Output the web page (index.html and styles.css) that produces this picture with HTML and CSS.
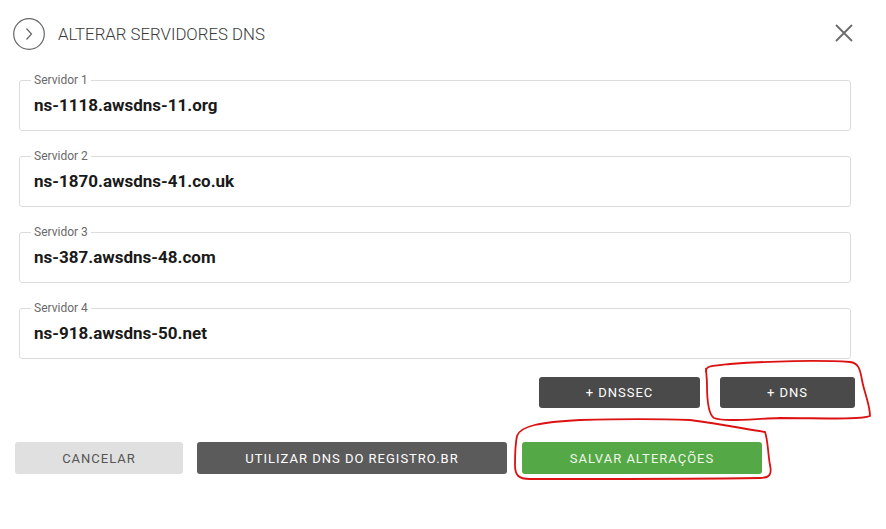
FILE: index.html
```html
<!DOCTYPE html>
<html lang="pt-BR">
<head>
<meta charset="utf-8">
<title>Alterar servidores DNS</title>
<link rel="stylesheet" href="styles.css">
</head>
<body>
<div class="dialog">
  <header class="head">
    <span class="circle">
      <svg width="32" height="32" viewBox="0 0 32 32"><circle cx="16" cy="16" r="15.3" fill="none" stroke="#666" stroke-width="1.2"/><path d="M13.5 10.5 L18.5 16 L13.5 21.5" fill="none" stroke="#666" stroke-width="1.2"/></svg>
    </span>
    <h1 class="title">ALTERAR SERVIDORES DNS</h1>
    <span class="close">
      <svg width="18" height="18" viewBox="0 0 18 18"><path d="M1 1 L17 17 M17 1 L1 17" stroke="#6b6b6b" stroke-width="1.8" fill="none"/></svg>
    </span>
  </header>

  <div class="fields">
    <fieldset class="field"><legend>Servidor 1</legend><div class="value">ns-1118.awsdns-11.org</div></fieldset>
    <fieldset class="field"><legend>Servidor 2</legend><div class="value">ns-1870.awsdns-41.co.uk</div></fieldset>
    <fieldset class="field"><legend>Servidor 3</legend><div class="value">ns-387.awsdns-48.com</div></fieldset>
    <fieldset class="field"><legend>Servidor 4</legend><div class="value">ns-918.awsdns-50.net</div></fieldset>
  </div>

  <div class="row-add">
    <button class="btn dark btn-dnssec">+ DNSSEC</button>
    <button class="btn dark btn-dns">+ DNS</button>
  </div>

  <div class="row-actions">
    <button class="btn light btn-cancel">CANCELAR</button>
    <button class="btn gray btn-registro">UTILIZAR DNS DO REGISTRO.BR</button>
    <button class="btn green btn-save">SALVAR ALTERAÇÕES</button>
  </div>
</div>

<svg class="marks" width="886" height="529" viewBox="0 0 886 529">
  <path d="M706 372 C705 366 710 366 730 364 C770 361 820 360 850 362 C858 363 860 368 862 380 C864 392 870 404 870 416 C860 420 820 418 780 418 C750 419 725 422 714 418 C708 414 707 400 707 385 C707 378 706 372 706 368" fill="none" stroke="#d11" stroke-width="1.8"/>
  <path d="M690 420 C720 424 740 428 765 432 C768 440 768 455 770 465 C772 474 770 478 760 478 C700 479 600 479 530 479 C518 479 515 475 515 465 C515 455 515 445 517 436 C520 426 540 422 580 420 C620 419 660 419 690 420" fill="none" stroke="#d11" stroke-width="1.8"/>
</svg>
</body>
</html>
```

FILE: styles.css
```css
html, body {
  margin: 0;
  padding: 0;
  background: #fff;
}
body {
  width: 886px;
  height: 529px;
  overflow: hidden;
  position: relative;
  font-family: Roboto, "Liberation Sans", Arial, sans-serif;
}
.dialog {
  padding: 18px 0 0 0;
}
.head {
  display: flex;
  align-items: center;
  height: 32px;
  padding-left: 13px;
  padding-right: 33px;
}
.circle {
  width: 32px;
  height: 32px;
  display: block;
}
.circle svg, .close svg { display: block; }
.title {
  margin: 0 0 0 13px;
  font-size: 16.8px;
  font-weight: 300;
  color: #3a3a3a;
  letter-spacing: 0;
  flex: 1;
}
.close {
  width: 18px;
  height: 18px;
  margin-bottom: 2px;
}
.fields {
  display: flex;
  flex-direction: column;
  gap: 18px;
  margin: 23px 35px 0 19px;
}
.field {
  margin: 0;
  height: 58px;
  box-sizing: border-box;
  border: 1px solid #dcdcdc;
  border-radius: 3px;
  padding: 0 14px;
}
.field legend {
  font-size: 12px;
  color: #6a6a6a;
  padding: 0 3px;
  margin-left: -3px;
  line-height: 14px;
}
.value {
  font-size: 17px;
  font-weight: 700;
  color: #1a1a1a;
  line-height: 20px;
  margin-top: 8px;
}
.btn {
  border: 0;
  border-radius: 3px;
  font-family: Roboto, "Liberation Sans", Arial, sans-serif;
  font-size: 13px;
  font-weight: 400;
  letter-spacing: 1px;
  padding: 0;
  color: #fff;
}
.row-add {
  display: flex;
  justify-content: flex-end;
  gap: 20px;
  margin: 18px 31px 0 0;
}
.dark { background: #4a4a4a; height: 31px; }
.btn-dnssec { width: 161px; }
.btn-dns { width: 135px; }
.row-actions {
  display: flex;
  gap: 14px;
  margin: 34px 0 0 15px;
}
.row-actions .btn { height: 32px; }
.light { background: #e0e0e0; color: #555; width: 168px; }
.gray { background: #5b5b5b; width: 310px; }
.green { background: #55a846; color: #eef7e8; width: 240px; margin-left: 1px; }
.marks {
  position: absolute;
  left: 0;
  top: 0;
  pointer-events: none;
}
```
